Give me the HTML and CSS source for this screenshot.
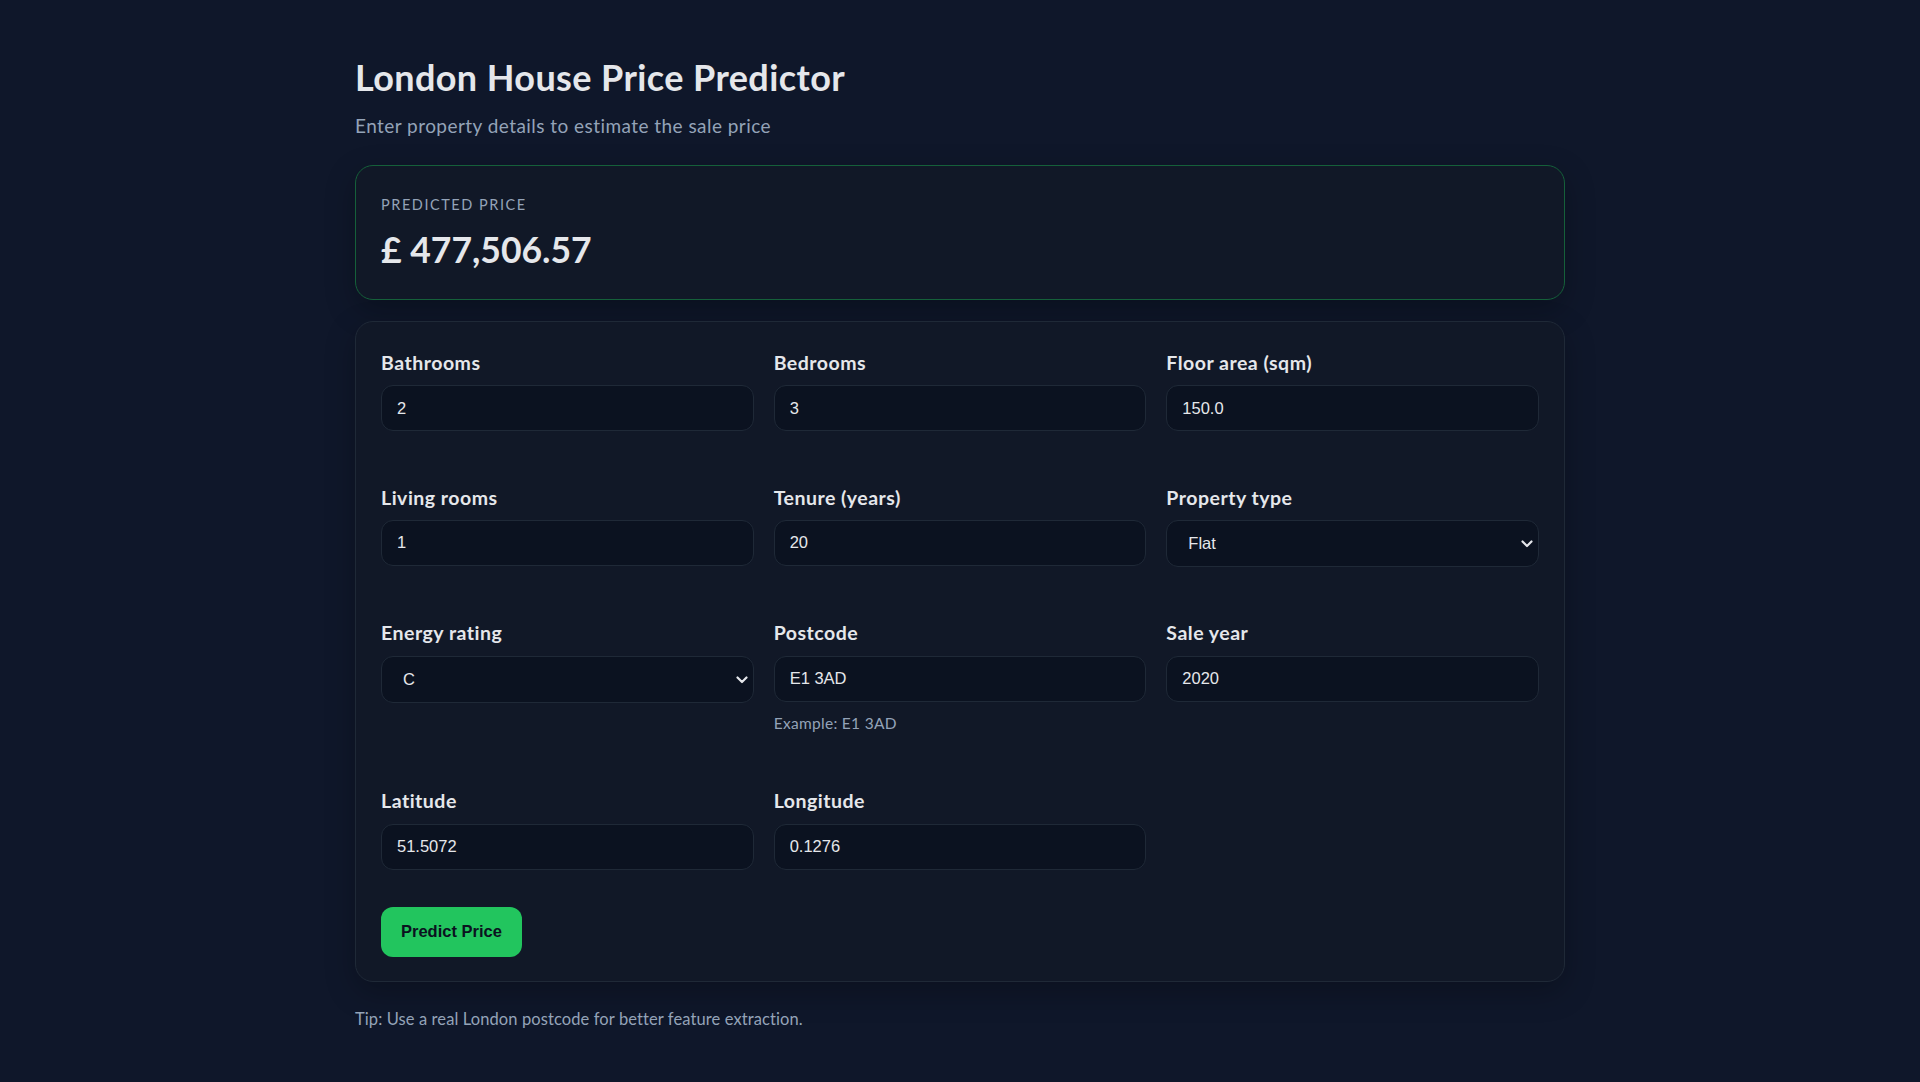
FILE: index.html
```html
<!DOCTYPE html>
<html lang="en">
<head>
<meta charset="utf-8">
<title>London House Price Predictor</title>
<link rel="stylesheet" href="styles.css">
</head>
<body>
<main class="container">
  <h1 class="title">London House Price Predictor</h1>
  <p class="subtitle">Enter property details to estimate the sale price</p>

  <section class="result-card">
    <div class="result-label">PREDICTED PRICE</div>
    <div class="result-value">£ 477,506.57</div>
  </section>

  <form class="form-card">
    <div class="grid">
      <div class="field">
        <label class="label">Bathrooms</label>
        <input class="input" type="text" value="2">
      </div>
      <div class="field">
        <label class="label">Bedrooms</label>
        <input class="input" type="text" value="3">
      </div>
      <div class="field">
        <label class="label">Floor area (sqm)</label>
        <input class="input" type="text" value="150.0">
      </div>

      <div class="field">
        <label class="label">Living rooms</label>
        <input class="input" type="text" value="1">
      </div>
      <div class="field">
        <label class="label">Tenure (years)</label>
        <input class="input" type="text" value="20">
      </div>
      <div class="field">
        <label class="label">Property type</label>
        <div class="select-wrap">
          <select class="select"><option>Flat</option></select>
          <svg class="chevron" width="12" height="8" viewBox="0 0 12 8"><path d="M1.5 1.5 L6 6 L10.5 1.5" fill="none" stroke="#e5e7eb" stroke-width="2.2" stroke-linecap="round" stroke-linejoin="round"/></svg>
        </div>
      </div>

      <div class="field">
        <label class="label">Energy rating</label>
        <div class="select-wrap">
          <select class="select"><option>C</option></select>
          <svg class="chevron" width="12" height="8" viewBox="0 0 12 8"><path d="M1.5 1.5 L6 6 L10.5 1.5" fill="none" stroke="#e5e7eb" stroke-width="2.2" stroke-linecap="round" stroke-linejoin="round"/></svg>
        </div>
      </div>
      <div class="field">
        <label class="label">Postcode</label>
        <input class="input" type="text" value="E1 3AD">
        <div class="hint">Example: E1 3AD</div>
      </div>
      <div class="field">
        <label class="label">Sale year</label>
        <input class="input" type="text" value="2020">
      </div>

      <div class="field">
        <label class="label">Latitude</label>
        <input class="input" type="text" value="51.5072">
      </div>
      <div class="field">
        <label class="label">Longitude</label>
        <input class="input" type="text" value="0.1276">
      </div>
    </div>
    <button class="button" type="button">Predict Price</button>
  </form>

  <p class="tip">Tip: Use a real London postcode for better feature extraction.</p>
</main>
</body>
</html>
```

FILE: styles.css
```css
html, body {
  margin: 0;
  padding: 0;
  background: #0f172a;
  min-height: 100%;
}

body {
  font-family: "Lato", "Open Sans", "Noto Sans", sans-serif;
  color: #e5e7eb;
}

.container {
  width: 1210px;
  margin: 0 auto;
  padding-top: 56px;
}

.title {
  margin: 0;
  font-size: 36px;
  line-height: 1.2;
  font-weight: 700;
  letter-spacing: 0.4px;
  color: #e5e7eb;
}

.subtitle {
  margin: 14px 0 0;
  font-size: 19px;
  line-height: 1.35;
  letter-spacing: 0.45px;
  color: #94a3b8;
}

.result-card {
  margin-top: 26px;
  background: #111827;
  border: 1px solid #15603a;
  border-radius: 18px;
  padding: 29px 25px 27px;
  box-shadow: 0 10px 30px rgba(0, 0, 0, 0.25);
}

.result-label {
  font-size: 14.5px;
  line-height: 1.35;
  letter-spacing: 1.55px;
  color: #94a3b8;
}

.result-value {
  margin-top: 14px;
  font-size: 35.5px;
  line-height: 1.22;
  font-weight: 700;
  color: #e5e7eb;
}

.form-card {
  margin-top: 21px;
  background: #111827;
  border: 1px solid #1f2937;
  border-radius: 18px;
  padding: 28px 25px 24px;
  box-shadow: 0 10px 30px rgba(0, 0, 0, 0.25);
}

.grid {
  display: grid;
  grid-template-columns: repeat(3, 1fr);
  column-gap: 20px;
  row-gap: 53.5px;
}

.field {
  display: flex;
  flex-direction: column;
}

.label {
  display: block;
  font-size: 19.5px;
  line-height: 1.3;
  font-weight: 700;
  letter-spacing: 0.5px;
  color: #e5e7eb;
  margin-bottom: 10px;
}

.input,
.select {
  box-sizing: border-box;
  width: 100%;
  height: 46px;
  background: #0b1220;
  border: 1px solid #1f2937;
  border-radius: 12px;
  color: #e5e7eb;
  font-family: "Liberation Sans", Arial, sans-serif;
  font-size: 16.5px;
  padding: 0 15px;
  outline: none;
}

.select-wrap {
  position: relative;
}

.select {
  height: 47px;
  padding-left: 21px;
  appearance: none;
  -webkit-appearance: none;
}

.chevron {
  position: absolute;
  right: 6px;
  top: 20px;
}

.hint {
  margin-top: 9px;
  font-size: 15.5px;
  line-height: 24px;
  letter-spacing: 0.3px;
  color: #94a3b8;
}

.button {
  margin-top: 37px;
  height: 50px;
  padding: 0 20px;
  background: #22c55e;
  color: #0b1220;
  border: none;
  border-radius: 12px;
  font-family: "Liberation Sans", Arial, sans-serif;
  font-weight: 700;
  font-size: 16.5px;
  cursor: pointer;
}

.tip {
  margin: 26px 0 0;
  font-size: 16.5px;
  line-height: 1.35;
  letter-spacing: 0.1px;
  color: #94a3b8;
}
```
